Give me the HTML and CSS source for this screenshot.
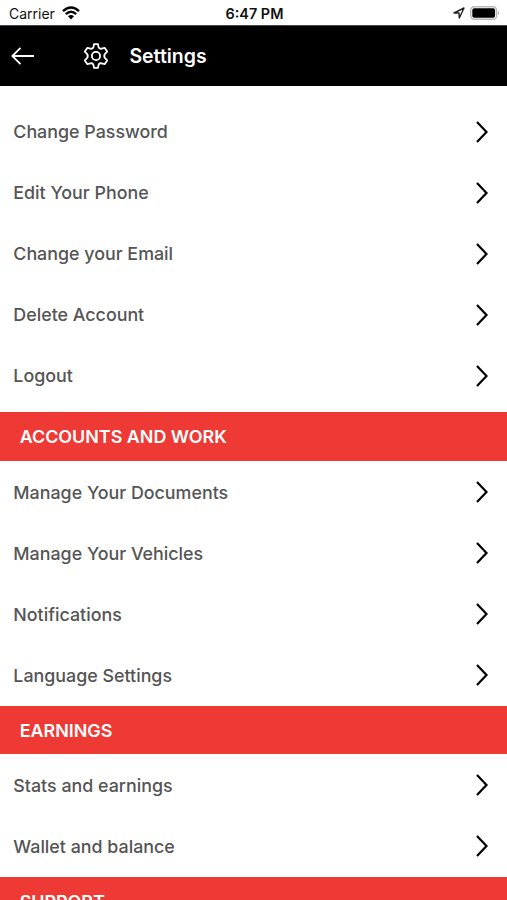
FILE: index.html
```html
<!DOCTYPE html>
<html lang="en">
<head>
<meta charset="utf-8">
<title>Settings</title>
<link rel="stylesheet" href="styles.css">
</head>
<body>
<svg class="defs" width="0" height="0"><symbol id="chev" viewBox="0 0 14 24"><path d="M2 2L11.5 12L2 22" fill="none" stroke="#000" stroke-width="2.2"/></symbol></svg>
<div class="screen">
<div class="status">
<span class="carrier"><span>Carrier</span><svg width="18" height="14" viewBox="0 0 18 14"><g fill="none" stroke="#000" stroke-width="2.4"><path d="M1 5.2Q9-2.2 17 5.2"/><path d="M3.8 8.2Q9 3.4 14.2 8.2"/></g><path d="M6 10.3Q9 7.8 12 10.3L9 13.4z"/></svg></span>
<span class="time">6:47 PM</span>
<span class="right"><svg width="12" height="12" viewBox="0 0 12 12"><path d="M1 6L11 1L6.3 11L6 6z" fill="none" stroke="#222" stroke-width="1.4" stroke-linejoin="round"/></svg><svg width="30" height="14" viewBox="0 0 30 14"><rect x=".7" y=".7" width="26" height="12.6" rx="3.8" fill="#fff" stroke="#b9b9b9" stroke-width="1.4"/><rect x="2.3" y="2.3" width="22.8" height="9.4" rx="2"/><path d="M28 5Q30.5 7 28 9z" fill="#b0b0b0"/></svg></span>
</div>
<header class="bar">
<svg width="24" height="20" viewBox="0 0 24 20"><path d="M23 10H1.5M9.5 1.8L1.3 10L9.5 18.2" fill="none" stroke="#fff" stroke-width="1.8"/></svg>
<svg class="gear" width="26" height="26" viewBox="0 0 26 26" fill="none" stroke="#fff" stroke-width="1.8" stroke-linejoin="round"><path d="M11 1.2H15L15.5 4Q16.2 6.2 18.6 5.6L21.6 4.8L24.2 8.6L22.2 10.6Q20.2 13 22.2 15.4L24.2 17.4L21.6 21.2L18.6 20.4Q16.2 19.8 15.5 22L15 24.8H11L10.5 22Q9.8 19.8 7.4 20.4L4.4 21.2L1.8 17.4L3.8 15.4Q5.8 13 3.8 10.6L1.8 8.6L4.4 4.8L7.4 5.6Q9.8 6.2 10.5 4z"/><circle cx="13" cy="13" r="4.1"/></svg>
<h1>Settings</h1>
</header>
<main>
<section class="first">
<div class="row"><span>Change Password</span><svg><use href="#chev"/></svg></div>
<div class="row"><span>Edit Your Phone</span><svg><use href="#chev"/></svg></div>
<div class="row"><span>Change your Email</span><svg><use href="#chev"/></svg></div>
<div class="row"><span>Delete Account</span><svg><use href="#chev"/></svg></div>
<div class="row"><span>Logout</span><svg><use href="#chev"/></svg></div>
</section>
<section>
<h2>ACCOUNTS AND WORK</h2>
<div class="row"><span>Manage Your Documents</span><svg><use href="#chev"/></svg></div>
<div class="row"><span>Manage Your Vehicles</span><svg><use href="#chev"/></svg></div>
<div class="row"><span>Notifications</span><svg><use href="#chev"/></svg></div>
<div class="row"><span>Language Settings</span><svg><use href="#chev"/></svg></div>
</section>
<section>
<h2>EARNINGS</h2>
<div class="row"><span>Stats and earnings</span><svg><use href="#chev"/></svg></div>
<div class="row"><span>Wallet and balance</span><svg><use href="#chev"/></svg></div>
</section>
<section>
<h2>SUPPORT</h2>
</section>
</main>
</div>
</body>
</html>
```
FILE: styles.css
```css
*{box-sizing:border-box}
body{margin:0;background:#fff;font-family:Inter,sans-serif}
.defs{display:block}
.screen{height:900px;overflow:hidden}
.status{height:25px;display:grid;grid-template-columns:1fr auto 1fr;align-items:center;padding:2px 7px 0 9px;font-size:14px;color:#111}
.carrier{display:flex;align-items:center;gap:7px}
.carrier svg{margin-bottom:2px}
.time{font-weight:600;font-size:14.4px}
.right{display:flex;justify-content:flex-end;align-items:center;gap:5px;padding-bottom:1px}
.bar{height:61px;background:#000;border-top:1px solid #444;color:#fff;display:flex;align-items:center;padding-left:11px}
.gear{margin-left:48px}
h1{font-size:19.5px;font-weight:600;margin:0 0 0 20.4px}
main{padding-top:15px}
.first{padding-bottom:6px}
.row{height:61.1px;display:flex;align-items:center;justify-content:space-between;padding:1px 18px 0 13.3px;font-size:17.85px;font-weight:500;color:#555}
.first .row span{margin-bottom:1px}
.row svg{width:14px;height:24px;margin-bottom:1px}
h2{height:48.8px;margin:0;padding-left:19.7px;background:#ef3934;color:#fff;font-size:17.9px;font-weight:600;line-height:49px}
```
